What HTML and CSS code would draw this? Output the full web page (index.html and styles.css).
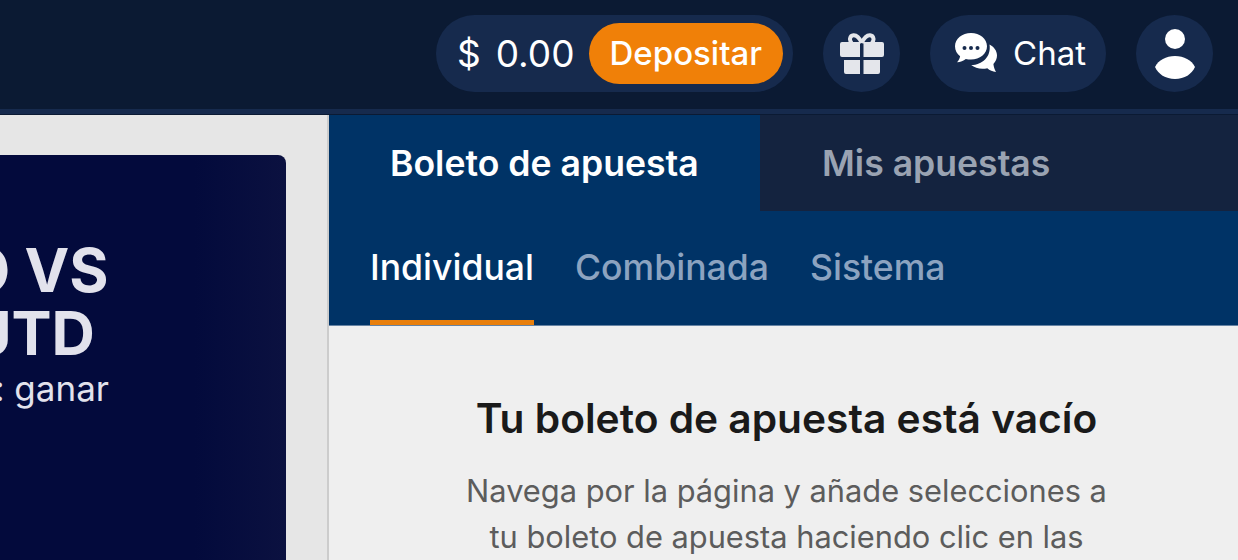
FILE: index.html
```html
<!DOCTYPE html>
<html>

<head>
    <meta charset="utf-8">
    <title>Boleto de apuesta</title>
    <link rel="stylesheet" href="styles.css">
</head>

<body>
    <header class="topbar">
        <div class="balance">
            <span class="amount"><span class="currency">$</span>0.00</span>
            <a class="deposit" href="#">Depositar</a>
        </div>
        <a class="round-btn" href="#">
            <svg width="44" height="42" viewBox="0 0 44 42">
                <path fill="#e4e6eb" d="M0 11a2 2 0 0 1 2-2h18v15H2a2 2 0 0 1-2-2zM23.500 9H42a2 2 0 0 1 2 2v11a2 2 0 0 1-2 2H23.500zM4 27h16v14H6a2 2 0 0 1-2-2zM23.500 27H40v12a2 2 0 0 1-2 2H23.500z" />
                <path fill="none" stroke="#e4e6eb" stroke-width="4" d="M21.700 10C19.500 5 16.500 2.100 13.500 2.300c-3.800.3-4.800 5.500-1.500 7.700M21.700 10c2.300-5 5.300-7.900 8.300-7.700 3.800.3 4.800 5.500 1.500 7.700" />
            </svg>
        </a>
        <a class="chat-btn" href="#">
            <svg width="42" height="40" viewBox="0 0 42 40">
                <path fill="#fff" d="M16 0c8.800 0 16 5.900 16 13.300S24.800 26.600 16 26.600c-1.800 0-3.600-.2-5.200-.7-2.300 2-5.300 3.200-8.800 3.400 1.600-1.700 2.700-3.700 3.100-6C2 21 0 17.400 0 13.300 0 5.900 7.200 0 16 0z" />
                <circle cx="9.500" cy="15" r="2" fill="#162a4d" />
                <circle cx="16" cy="15" r="2" fill="#162a4d" />
                <circle cx="22.500" cy="15" r="2" fill="#162a4d" />
                <path fill="#fff" d="M34.500 11.500c4.500 2.300 7.500 6.400 7.500 11 0 3.200-1.300 6.100-3.600 8.400.3 2.800 1.100 5.300 2.600 8.100-3.300-.4-6.400-1.700-8.700-3.800-1.500.4-3.100.6-4.800.6-4.400 0-8.400-1.400-11.300-3.800 10.500.1 20.300-7.700 18.300-20.500z" />
            </svg>
            <span>Chat</span>
        </a>
        <a class="round-btn" href="#">
            <svg width="40" height="50" viewBox="0 0 40 50">
                <circle cx="20" cy="10" r="10" fill="#fff" />
                <path fill="#fff" d="M0 38C3.500 31 11 27 20 27s16.500 4 20 11c-3 7-10.500 12-20 12S3 45 0 38z" />
            </svg>
        </a>
    </header>

    <main class="content">
        <section class="promo-area">
            <div class="promo">
                <h2>MARIO VS<br>MAN UTD</h2>
                <p>Apuesta: ganar</p>
            </div>
        </section>

        <aside class="betslip">
            <div class="main-tabs">
                <a class="main-tab active" href="#">Boleto de apuesta</a>
                <a class="main-tab" href="#">Mis apuestas</a>
            </div>
            <div class="sub-tabs">
                <a class="sub-tab active" href="#">Individual</a>
                <a class="sub-tab" href="#">Combinada</a>
                <a class="sub-tab" href="#">Sistema</a>
            </div>
            <div class="empty">
                <h3>Tu boleto de apuesta está vacío</h3>
                <p>Navega por la página y añade selecciones a tu boleto de apuesta haciendo clic en las cuotas</p>
            </div>
        </aside>
    </main>
</body>

</html>
```

FILE: styles.css
```css
* {
    margin: 0;
    padding: 0;
    box-sizing: border-box;
}

html,
body {
    height: 100%;
    overflow: hidden;
}

body {
    display: flex;
    flex-direction: column;
    font-family: Inter, "Liberation Sans", sans-serif;
    background-color: #e6e6e6;
}

a {
    color: inherit;
    text-decoration: none;
}

.topbar {
    flex: none;
    height: 115px;
    display: flex;
    justify-content: flex-end;
    align-items: flex-start;
    gap: 30px;
    padding: 15px 25px 0 0;
    background-color: #0b1a33;
    border-bottom: 1px solid #0b1a33;
    box-shadow: inset 0 -5px #162a4d;
    color: #fff;
}

.balance {
    height: 77px;
    display: flex;
    align-items: center;
    gap: 14px;
    padding: 0 10px 0 21px;
    border-radius: 39px;
    background-color: #162a4d;
}

.amount {
    font-size: 37px;
}

.currency {
    margin-right: 15px;
}

.deposit {
    height: 61px;
    display: flex;
    align-items: center;
    padding: 0 21px 2px;
    border-radius: 31px;
    background-color: #f08008;
    font-size: 33px;
    font-weight: 500;
}

.round-btn {
    width: 77px;
    height: 77px;
    display: flex;
    justify-content: center;
    align-items: center;
    border-radius: 50%;
    background-color: #162a4d;
}

.chat-btn {
    height: 77px;
    display: flex;
    align-items: center;
    gap: 16px;
    padding: 0 20px 2px 25px;
    border-radius: 39px;
    background-color: #162a4d;
    font-size: 33px;
}

.content {
    flex: 1;
    min-height: 0;
    display: flex;
}

.promo-area {
    width: 329px;
    flex: none;
    padding-top: 40px;
    border-right: 2px solid #cccccc;
    overflow: hidden;
}

.promo {
    width: 306px;
    height: 100%;
    margin-left: -20px;
    padding-top: 84px;
    border-radius: 8px 8px 0 0;
    background: linear-gradient(90deg, #030a3c 70%, #0b1140);
    color: #e2e2ec;
    overflow: hidden;
}

.promo h2 {
    margin-left: -173px;
    font-size: 60px;
    line-height: 63px;
    font-weight: 700;
    white-space: nowrap;
}

.promo p {
    margin: 2px 0 0 -122px;
    font-size: 35px;
    white-space: nowrap;
}

.betslip {
    flex: 1;
    min-width: 0;
    display: flex;
    flex-direction: column;
    background-color: #efefef;
    overflow: hidden;
}

.main-tabs {
    flex: none;
    height: 96px;
    display: flex;
    background-color: #14233f;
}

.main-tab {
    display: flex;
    align-items: center;
    padding: 0 62px;
    font-size: 35.600px;
    font-weight: 600;
    color: #9aa3b2;
    white-space: nowrap;
}

.main-tab.active {
    width: 431px;
    padding-left: 61px;
    background-color: #003366;
    color: #fff;
}

.sub-tabs {
    flex: none;
    height: 115px;
    display: flex;
    gap: 41px;
    padding-left: 41px;
    background-color: #003366;
    border-bottom: 1px solid #6683a3;
}

.sub-tab {
    display: flex;
    align-items: center;
    padding-top: 4px;
    font-size: 35.600px;
    font-weight: 500;
    color: #8ca3c0;
    border-bottom: 5px solid transparent;
}

.sub-tab.active {
    color: #fff;
    border-bottom-color: #e87f0c;
}

.empty {
    padding: 68px 119px 0 125px;
    text-align: center;
}

.empty h3 {
    font-size: 40.700px;
    font-weight: 600;
    color: #1a1a1a;
    white-space: nowrap;
}

.empty p {
    margin-top: 25px;
    font-size: 30.800px;
    line-height: 46px;
    color: #5c5c5c;
}
```
